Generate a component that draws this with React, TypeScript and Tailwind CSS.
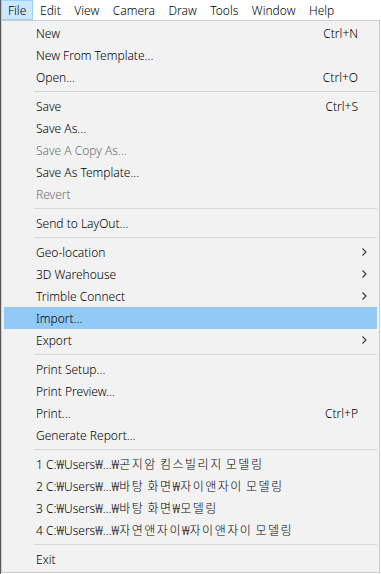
import React from "react";

type Item =
  | { kind: "item"; label: string; shortcut?: string; disabled?: boolean; sub?: boolean; active?: boolean }
  | { kind: "sep" };

const items: Item[] = [
  { kind: "item", label: "New", shortcut: "Ctrl+N" },
  { kind: "item", label: "New From Template..." },
  { kind: "item", label: "Open...", shortcut: "Ctrl+O" },
  { kind: "sep" },
  { kind: "item", label: "Save", shortcut: "Ctrl+S" },
  { kind: "item", label: "Save As..." },
  { kind: "item", label: "Save A Copy As...", disabled: true },
  { kind: "item", label: "Save As Template..." },
  { kind: "item", label: "Revert", disabled: true },
  { kind: "sep" },
  { kind: "item", label: "Send to LayOut..." },
  { kind: "sep" },
  { kind: "item", label: "Geo-location", sub: true },
  { kind: "item", label: "3D Warehouse", sub: true },
  { kind: "item", label: "Trimble Connect", sub: true },
  { kind: "item", label: "Import...", active: true },
  { kind: "item", label: "Export", sub: true },
  { kind: "sep" },
  { kind: "item", label: "Print Setup..." },
  { kind: "item", label: "Print Preview..." },
  { kind: "item", label: "Print...", shortcut: "Ctrl+P" },
  { kind: "item", label: "Generate Report..." },
  { kind: "sep" },
  { kind: "item", label: "1 C:\u20a9Users\u20a9...\u20a9곤지암 킴스빌리지 모델링" },
  { kind: "item", label: "2 C:\u20a9Users\u20a9...\u20a9바탕 화면\u20a9자이앤자이 모델링" },
  { kind: "item", label: "3 C:\u20a9Users\u20a9...\u20a9바탕 화면\u20a9모델링" },
  { kind: "item", label: "4 C:\u20a9Users\u20a9...\u20a9자연앤자이\u20a9자이앤자이 모델링" },
  { kind: "sep" },
  { kind: "item", label: "Exit" },
];

const menus = ["File", "Edit", "View", "Camera", "Draw", "Tools", "Window", "Help"];

function Chevron() {
  return (
    <svg width="5" height="8" viewBox="0 0 5 8" className="block">
      <path d="M0.5 0.5 L4 4 L0.5 7.5" fill="none" stroke="#333" strokeWidth="1.1" />
    </svg>
  );
}

function Label({ text }: { text: string }) {
  const parts = text.split(/([\uAC00-\uD7A3]+)/);
  return (
    <>
      {parts.map((p, i) =>
        /[\uAC00-\uD7A3]/.test(p) ? (
          <span key={i} className="tracking-[1.5px] font-light">
            {p}
          </span>
        ) : (
          <span key={i}>{p}</span>
        )
      )}
    </>
  );
}

export default function App() {
  return (
    <div
      className="w-[381px] h-[574px] bg-white flex flex-col border-l border-[#5a5a5a] overflow-hidden text-[12px] font-light text-black"
      style={{ fontFamily: "'Noto Sans', 'Noto Sans CJK KR', sans-serif" }}
    >
      <div className="h-[20px] flex items-stretch bg-white shrink-0">
        {menus.map((m, i) => (
          <div
            key={m}
            className={
              i === 0
                ? "flex items-center pt-[2px] px-[6px] bg-[#cce8ff] border border-[#99d1ff] leading-none"
                : "flex items-center pt-[2px] px-[5.75px] border border-transparent leading-none"
            }
          >
            {m}
          </div>
        ))}
      </div>
      <div className="flex-1 flex flex-col bg-[#f2f2f2] border border-[#cccccc] mr-[1px] mb-[1px] px-[2px] pt-[1px]">
        {items.map((it, idx) =>
          it.kind === "sep" ? (
            <div key={idx} className="h-[7px] flex items-center pl-[30px]">
              <div className="h-px w-full bg-[#d7d7d7]" />
            </div>
          ) : (
            <div
              key={idx}
              className={
                "h-[22px] flex items-center pt-[2px] pl-[32px] pr-[19px] " +
                (it.active ? "bg-[#91c9f7] " : "") +
                (it.disabled ? "text-[#6d6d6d]" : "text-black")
              }
            >
              <span className="flex-1 whitespace-nowrap">
                <Label text={it.label} />
              </span>
              {it.shortcut && <span className="whitespace-nowrap">{it.shortcut}</span>}
              {it.sub && (
                <span className="mr-[-9px] -mt-[2px]">
                  <Chevron />
                </span>
              )}
            </div>
          )
        )}
      </div>
    </div>
  );
}
